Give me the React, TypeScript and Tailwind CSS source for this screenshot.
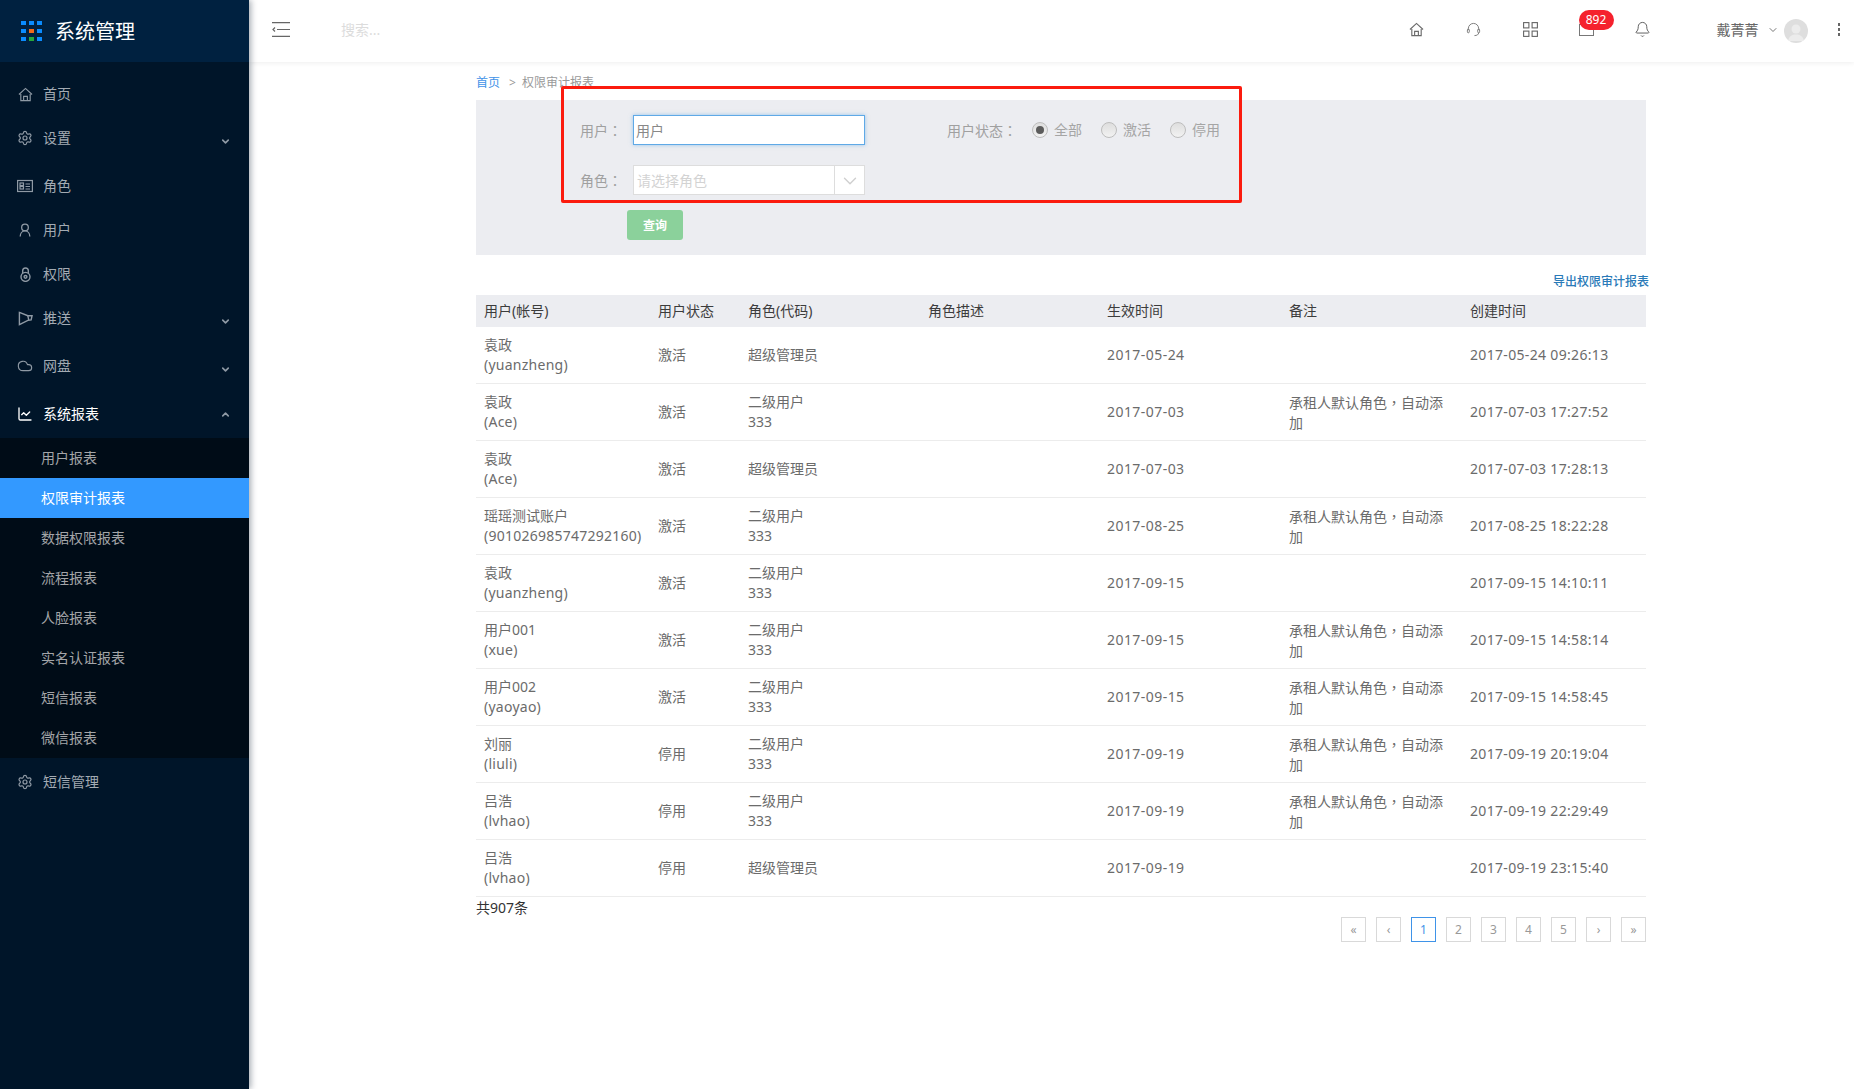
import { Bell, ChevronDown, ChevronUp, Cloud, LineChart, Settings } from 'lucide-react';

type IconProps = { className?: string };

function HomeIcon({ className }: IconProps) {
  return (
    <svg viewBox="0 0 16 16" fill="none" stroke="currentColor" strokeWidth="1.2" className={className}>
      <path d="M1 8 8 1.500 15 8" />
      <path d="M3 7.500v7h10v-7" />
      <path d="M6 14.500v-4.500h4v4.500" />
    </svg>
  );
}

function RoleIcon({ className }: IconProps) {
  return (
    <svg viewBox="0 0 16 14" fill="none" stroke="currentColor" strokeWidth="1.2" className={className}>
      <rect x="0.600" y="1.500" width="14.800" height="11" />
      <rect x="3" y="4" width="3.500" height="2.500" />
      <rect x="3" y="7.500" width="3.500" height="2.500" />
      <path d="M8.500 5h4.500M8.500 7.500h4.500M8.500 10h4.500" />
    </svg>
  );
}

function UserIcon({ className }: IconProps) {
  return (
    <svg viewBox="0 0 16 16" fill="none" stroke="currentColor" strokeWidth="1.500" className={className}>
      <circle cx="8" cy="5" r="3.800" />
      <path d="M2.500 15.500c0-3.500 2.200-6.500 5.500-6.500s5.500 3 5.500 6.500" />
    </svg>
  );
}

function LockIcon({ className }: IconProps) {
  return (
    <svg viewBox="0 0 16 16" fill="none" stroke="currentColor" strokeWidth="1.500" className={className}>
      <path d="M5 7V4a3 3 0 0 1 6 0v3" />
      <circle cx="8" cy="10.500" r="4.800" />
      <circle cx="8" cy="10.500" r="1.500" />
    </svg>
  );
}

function SendIcon({ className }: IconProps) {
  return (
    <svg viewBox="0 0 16 16" fill="none" stroke="currentColor" strokeWidth="1.500" className={className}>
      <path d="M1.500 1.500 10.500 5H15l-1 4.500-3.500.5-9 4.500z" />
      <path d="M10.500 5l1 5" />
    </svg>
  );
}

function HamburgerIcon() {
  return (
    <svg viewBox="0 0 18 15" fill="none" stroke="#666" strokeWidth="1.200" className="h-[15px] w-[18px]">
      <path d="M0 .6h18M0 14.400h18M5 7.500h13" />
      <path d="M3 5.500 1 7.500l2 2" />
    </svg>
  );
}

function HeadsetIcon() {
  return (
    <svg viewBox="0 0 16 16" fill="none" stroke="#777" strokeWidth="1" className="h-[15px] w-[15px]">
      <path d="M2.500 8.500V7a5.500 5.500 0 0 1 11 0v1.500" />
      <rect x="1.500" y="7.500" width="2" height="4" rx="1" />
      <rect x="12.500" y="7.500" width="2" height="4" rx="1" />
      <path d="M13.500 11.500c0 2-2 3-4.500 3" />
    </svg>
  );
}

function GridIcon() {
  return (
    <svg viewBox="0 0 15 15" fill="none" stroke="#666" strokeWidth="1.100" className="h-[15px] w-[15px]">
      <rect x="0.600" y="0.600" width="5.300" height="5.300" />
      <rect x="9.100" y="0.600" width="5.300" height="5.300" />
      <rect x="0.600" y="9.100" width="5.300" height="5.300" />
      <rect x="9.100" y="9.100" width="5.300" height="5.300" />
    </svg>
  );
}

// centred full-width punctuation, as in the picture
function Punct({ children }: { children: string }) {
  return <span className="font-['Noto_Sans_CJK_TC',sans-serif]">{children}</span>;
}

const LOGO_DOTS = [
  'bg-[#0a8cff]', 'bg-[#0a8cff]', 'bg-[#0a8cff]',
  'bg-[#0a8cff]', 'bg-[#f26a1b]', 'bg-[#0a8cff]',
  'bg-[#0a8cff]', 'bg-[#25a83a]', 'bg-[#0a8cff]',
];

function NavItem({
  icon,
  label,
  arrow,
  height = 'h-11',
  active,
}: {
  icon: React.ReactNode;
  label: string;
  arrow?: 'down' | 'up';
  height?: string;
  active?: boolean;
}) {
  return (
    <div className={`flex items-center pl-[17px] pr-[18px] text-sm ${height} ${active ? 'text-white' : 'text-[#a3abb3]'}`}>
      <span className={`flex w-[16px] justify-center ${active ? 'text-white' : 'text-[#8f9aa5]'}`}>{icon}</span>
      <span className="ml-[10px] flex-1">{label}</span>
      {arrow === 'down' && <ChevronDown width={11} height={11} strokeWidth={3.5} className="mt-[6px] text-[#8f9aa5]" />}
      {arrow === 'up' && <ChevronUp width={11} height={11} strokeWidth={3.5} className="text-[#8f9aa5]" />}
    </div>
  );
}

const SUB_ITEMS = ['用户报表', '权限审计报表', '数据权限报表', '流程报表', '人脸报表', '实名认证报表', '短信报表', '微信报表'];

function Sidebar() {
  return (
    <aside className="relative z-20 min-h-[1089px] w-[249px] shrink-0 bg-[#001529] shadow-[2px_0_6px_rgba(0,21,41,0.35)]">
      <div className="flex h-[62px] items-center bg-[#002140] pl-[21px]">
        <div className="grid w-[21px] grid-cols-3 gap-[3.500px]">
          {LOGO_DOTS.map((c, i) => (
            <span key={i} className={`h-[4.500px] w-[4.500px] ${c}`} />
          ))}
        </div>
        <span className="ml-[13px] mt-[2px] text-[20px] text-white">系统管理</span>
      </div>
      <nav className="pt-[10px]">
        <NavItem icon={<HomeIcon className="h-[15px] w-[15px]" />} label="首页" />
        <NavItem icon={<Settings width={16} height={16} strokeWidth={1.8} />} label="设置" arrow="down" height="h-12 pb-1" />
        <NavItem icon={<RoleIcon className="h-[14px] w-[16px]" />} label="角色" />
        <NavItem icon={<UserIcon className="h-[14px] w-[14px]" />} label="用户" />
        <NavItem icon={<LockIcon className="h-[15px] w-[15px]" />} label="权限" />
        <NavItem icon={<SendIcon className="h-[15px] w-[15px]" />} label="推送" arrow="down" height="h-12 pb-1" />
        <NavItem icon={<Cloud width={16} height={16} strokeWidth={1.7} />} label="网盘" arrow="down" height="h-12 pb-1" />
        <NavItem icon={<LineChart width={16} height={16} strokeWidth={2} />} label="系统报表" arrow="up" height="h-[46px] pb-[2px]" active />
        <div className="bg-[#000c17]">
          {SUB_ITEMS.map(name => (
            <div
              key={name}
              className={`flex h-10 items-center pl-[41px] text-sm ${name === '权限审计报表' ? 'bg-[#3399ff] text-white' : 'text-[#a3a5a8]'}`}
            >
              {name}
            </div>
          ))}
        </div>
        <NavItem icon={<Settings width={16} height={16} strokeWidth={1.8} />} label="短信管理" height="h-12" />
      </nav>
    </aside>
  );
}

function Header() {
  return (
    <header className="relative z-10 flex h-[62px] items-center bg-white pb-[3px] pl-[23px] shadow-[0_1px_5px_rgba(0,0,0,0.07)]">
      <HamburgerIcon />
      <span className="ml-[51px] text-sm text-[#dcdcdc]">搜索...</span>
      <div className="ml-auto flex items-center text-[#666]">
        <HomeIcon className="h-[15px] w-[15px] text-[#6a6a6a]" />
        <span className="ml-[42px]"><HeadsetIcon /></span>
        <span className="ml-[42px]"><GridIcon /></span>
        <div className="relative ml-[41px] h-[12px] w-[15px] border border-[#777]">
          <span className="absolute left-[-1px] top-[-15px] flex h-5 w-[35px] items-center justify-center rounded-full bg-[#f5212d] text-xs text-white">892</span>
        </div>
        <Bell width={17} height={17} strokeWidth={1.3} className="ml-[40px] text-[#555]" />
        <span className="ml-[66px] text-sm text-[#666]">戴菁菁</span>
        <ChevronDown width={12} height={12} strokeWidth={1.6} className="ml-[8px] text-[#555]" />
        <span className="ml-[5px] mt-[3px] flex h-6 w-6 items-center justify-center overflow-hidden rounded-full bg-[#dedede]">
          <svg viewBox="0 0 24 24" className="h-6 w-6" fill="#ececec">
            <circle cx="12" cy="10" r="4.500" />
            <path d="M4 22c1-5 4-6.500 8-6.500s7 1.500 8 6.500z" />
          </svg>
        </span>
        <span className="ml-[30px] mr-[14px] flex flex-col gap-[2.500px]">
          <i className="h-[2.500px] w-[2.500px] bg-[#666]" />
          <i className="h-[2.500px] w-[2.500px] bg-[#666]" />
          <i className="h-[2.500px] w-[2.500px] bg-[#666]" />
        </span>
      </div>
    </header>
  );
}

function Radio({ label, checked }: { label: string; checked?: boolean }) {
  return (
    <span className="mr-[19px] flex items-center text-sm text-[#a5a5a5]">
      <span className="flex h-[16px] w-[16px] items-center justify-center rounded-full border border-[#bdbdbd] bg-gradient-to-b from-[#dedede] to-[#f2f2f2]">
        {checked && <span className="h-[8px] w-[8px] rounded-full bg-[#5c5c5c]" />}
      </span>
      <span className="ml-[6px]">{label}</span>
    </span>
  );
}

function FilterPanel() {
  return (
    <div className="relative h-[155px] bg-[#ecedf1] pl-[104px] pt-[15px]">
      <div className="flex h-[30px] items-center">
        <span className="w-[53px] text-sm text-[#a0a0a0]">用户<Punct>：</Punct></span>
        <input
          readOnly
          value="用户"
          className="h-[30px] w-[232px] border border-[#5fa9e6] bg-white px-[2px] text-sm text-[#888] shadow-[0_0_4px_rgba(80,160,230,0.55)] outline-none"
        />
        <span className="ml-[82px] w-[85px] text-sm text-[#a0a0a0]">用户状态<Punct>：</Punct></span>
        <Radio label="全部" checked />
        <Radio label="激活" />
        <Radio label="停用" />
      </div>
      <div className="mt-5 flex h-[30px] items-center">
        <span className="w-[53px] text-sm text-[#a0a0a0]">角色<Punct>：</Punct></span>
        <div className="flex h-[30px] w-[232px] items-center border border-[#dddddd] bg-white">
          <span className="mt-[2px] flex-1 pl-[3px] text-sm text-[#d3d3d3]">请选择角色</span>
          <span className="flex h-full w-[30px] items-center justify-center border-l border-[#dddddd]">
            <ChevronDown width={22} height={22} strokeWidth={1.5} className="mt-px text-[#cfcfcf]" />
          </span>
        </div>
      </div>
      <button type="button" className="ml-[47px] mt-[15px] block h-[30px] w-[56px] rounded-[3px] bg-[#8bd19b] pt-px text-xs font-bold text-white">
        查询
      </button>
      {/* annotation frame */}
      <div className="absolute left-[85px] top-[-14px] h-[117px] w-[681px] rounded-[2px] border-[3px] border-[#fb1b0e]" />
    </div>
  );
}

const ADMIN = ['超级管理员'];
const LEVEL2 = ['二级用户', '333'];

const ROWS = [
  { name: '袁政', account: '(yuanzheng)', status: '激活', role: ADMIN, from: '2017-05-24', note: false, created: '2017-05-24 09:26:13' },
  { name: '袁政', account: '(Ace)', status: '激活', role: LEVEL2, from: '2017-07-03', note: true, created: '2017-07-03 17:27:52' },
  { name: '袁政', account: '(Ace)', status: '激活', role: ADMIN, from: '2017-07-03', note: false, created: '2017-07-03 17:28:13' },
  { name: '瑶瑶测试账户', account: '(901026985747292160)', status: '激活', role: LEVEL2, from: '2017-08-25', note: true, created: '2017-08-25 18:22:28' },
  { name: '袁政', account: '(yuanzheng)', status: '激活', role: LEVEL2, from: '2017-09-15', note: false, created: '2017-09-15 14:10:11' },
  { name: '用户001', account: '(xue)', status: '激活', role: LEVEL2, from: '2017-09-15', note: true, created: '2017-09-15 14:58:14' },
  { name: '用户002', account: '(yaoyao)', status: '激活', role: LEVEL2, from: '2017-09-15', note: true, created: '2017-09-15 14:58:45' },
  { name: '刘丽', account: '(liuli)', status: '停用', role: LEVEL2, from: '2017-09-19', note: true, created: '2017-09-19 20:19:04' },
  { name: '吕浩', account: '(lvhao)', status: '停用', role: LEVEL2, from: '2017-09-19', note: true, created: '2017-09-19 22:29:49' },
  { name: '吕浩', account: '(lvhao)', status: '停用', role: ADMIN, from: '2017-09-19', note: false, created: '2017-09-19 23:15:40' },
];

const COLUMNS = [
  { title: '用户(帐号)', width: 'w-[174px]' },
  { title: '用户状态', width: 'w-[90px]' },
  { title: '角色(代码)', width: 'w-[180px]' },
  { title: '角色描述', width: 'w-[179px]' },
  { title: '生效时间', width: 'w-[182px]' },
  { title: '备注', width: 'w-[181px]' },
  { title: '创建时间', width: 'w-[184px]' },
];

function AuditTable() {
  const td = 'h-[57px] border-b border-[#ececec] pl-[8px]';
  return (
    <table className="w-full table-fixed border-separate border-spacing-0 text-sm leading-5 text-[#6b6b6b]">
      <colgroup>
        {COLUMNS.map(c => <col key={c.title} className={c.width} />)}
      </colgroup>
      <thead>
        <tr className="h-8 bg-[#ecedf1]">
          {COLUMNS.map(c => (
            <th key={c.title} className="pl-[8px] text-left font-normal text-[#3c3c3c]">{c.title}</th>
          ))}
        </tr>
      </thead>
      <tbody>
        {ROWS.map((r, idx) => (
          <tr key={idx}>
            <td className={td}>
              <div>{r.name}</div>
              <div className="tracking-[0.25px]">{r.account}</div>
            </td>
            <td className={td}>{r.status}</td>
            <td className={td}>
              {r.role.map(line => <div key={line}>{line}</div>)}
            </td>
            <td className={td} />
            <td className={`${td} tracking-[0.45px]`}>{r.from}</td>
            <td className={td}>
              {r.note && <div className="w-[160px]">承租人默认角色<Punct>，</Punct>自动添加</div>}
            </td>
            <td className={`${td} tracking-[0.33px]`}>{r.created}</td>
          </tr>
        ))}
      </tbody>
    </table>
  );
}

function Pagination() {
  const pages = ['«', '‹', '1', '2', '3', '4', '5', '›', '»'];
  return (
    <div className="-mt-px flex justify-end gap-[10px]">
      {pages.map(p => (
        <span
          key={p}
          className={`flex h-[25px] w-[25px] items-center justify-center border text-xs ${
            p === '1' ? 'border-[#3f93e8] text-[#3f93e8]' : 'border-[#d9d9d9] text-[#999]'
          }`}
        >
          {p}
        </span>
      ))}
    </div>
  );
}

export default function App() {
  return (
    <div className="flex min-h-[1089px] bg-white font-['Noto_Sans','Noto_Sans_CJK_SC',sans-serif]">
      <Sidebar />
      <div className="min-w-0 flex-1">
        <Header />
        <main className="pl-[227px] pr-[208px] pt-[11px]">
          <div className="mb-[8px] flex h-[19px] items-center text-xs text-[#999]">
            <span className="text-[#3f93e8]">首页</span>
            <span className="ml-[9px] mr-[6px]">&gt;</span>
            <span>权限审计报表</span>
          </div>
          <FilterPanel />
          <div className="-mr-[3px] flex h-10 justify-end pt-[19px] text-xs font-medium leading-4 text-[#2a7ab8]">
            导出权限审计报表
          </div>
          <AuditTable />
          <div className="mt-px text-sm leading-5 text-[#333]">共907条</div>
          <Pagination />
        </main>
      </div>
    </div>
  );
}
